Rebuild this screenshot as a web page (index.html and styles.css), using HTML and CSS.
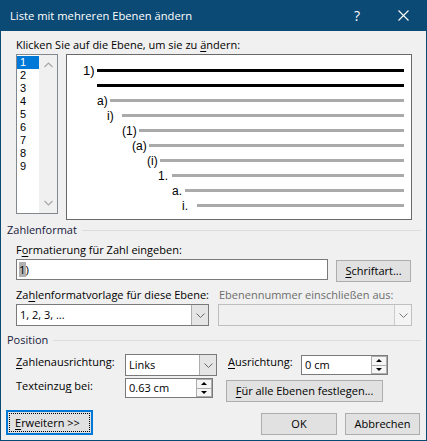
FILE: index.html
```html
<!DOCTYPE html>
<html lang="de">
<head>
<meta charset="utf-8">
<title>Liste mit mehreren Ebenen ändern</title>
<link rel="stylesheet" href="styles.css">
</head>
<body>
<div class="window">
  <div class="titlebar">
    <span class="title">Liste mit mehreren Ebenen ändern</span>
    <span class="tb-btn help">?</span>
    <span class="tb-btn close"><svg width="11" height="11" viewBox="0 0 11 11"><path d="M0.5 0.5 L10.5 10.5 M10.5 0.5 L0.5 10.5" stroke="#fff" stroke-width="1.1" fill="none"/></svg></span>
  </div>
  <div class="content">
    <div class="lbl indent">Klicken Sie auf die Ebene, um sie zu <u>ä</u>ndern:</div>
    <div class="levels">
      <div class="listbox">
        <ul class="items">
          <li class="sel">1</li><li>2</li><li>3</li><li>4</li><li>5</li><li>6</li><li>7</li><li>8</li><li>9</li>
        </ul>
        <div class="vscroll">
          <svg width="9" height="6" viewBox="0 0 9 6"><polyline points="0.5,5 4.5,1 8.5,5" fill="none" stroke="#a8a8a8" stroke-width="1.2"/></svg>
          <svg width="9" height="6" viewBox="0 0 9 6"><polyline points="0.5,1 4.5,5 8.5,1" fill="none" stroke="#a8a8a8" stroke-width="1.2"/></svg>
        </div>
      </div>
      <div class="preview">
        <div class="pv-row" style="padding-left:16px"><span class="pv-lbl big" style="width:14px">1)</span><i class="bar black"></i></div>
        <div class="pv-row" style="padding-left:30px"><i class="bar black"></i></div>
        <div class="pv-row" style="padding-left:30px"><span class="pv-lbl" style="width:13px">a)</span><i class="bar"></i></div>
        <div class="pv-row" style="padding-left:40px"><span class="pv-lbl" style="width:15px">i)</span><i class="bar"></i></div>
        <div class="pv-row" style="padding-left:55px"><span class="pv-lbl" style="width:17px">(1)</span><i class="bar"></i></div>
        <div class="pv-row" style="padding-left:65px"><span class="pv-lbl" style="width:17px">(a)</span><i class="bar"></i></div>
        <div class="pv-row" style="padding-left:80px"><span class="pv-lbl" style="width:13px">(i)</span><i class="bar"></i></div>
        <div class="pv-row" style="padding-left:91px"><span class="pv-lbl" style="width:14px">1.</span><i class="bar"></i></div>
        <div class="pv-row" style="padding-left:105px"><span class="pv-lbl" style="width:13px">a.</span><i class="bar"></i></div>
        <div class="pv-row" style="padding-left:115px"><span class="pv-lbl" style="width:15px">i.</span><i class="bar"></i></div>
      </div>
    </div>

    <div class="ghead first"><span>Zahlenformat</span><i class="rule"></i></div>
    <div class="lbl indent mt4">F<u>o</u>rmatierung für Zahl eingeben:</div>
    <div class="row-input">
      <div class="textbox"><span class="selected">1</span>)</div>
      <div class="btn btn-font"><u>S</u>chriftart...</div>
    </div>
    <div class="row-labels">
      <div class="lbl col1">Za<u>h</u>lenformatvorlage für diese Ebene:</div>
      <div class="lbl disabled">Ebenennummer einschließen aus:</div>
    </div>
    <div class="row-selects">
      <div class="combo w193"><span class="val">1, 2, 3, ...</span><span class="arrow"><svg width="9" height="5" viewBox="0 0 9 5"><polyline points="0.5,0.5 4.5,4.5 8.5,0.5" fill="none" stroke="#666" stroke-width="1"/></svg></span></div>
      <div class="combo w194 off"><span class="val"></span><span class="arrow"><svg width="9" height="5" viewBox="0 0 9 5"><polyline points="0.5,0.5 4.5,4.5 8.5,0.5" fill="none" stroke="#777" stroke-width="1"/></svg></span></div>
    </div>

    <div class="ghead second"><span>Position</span><i class="rule"></i></div>
    <div class="pos-row one">
      <div class="lbl plab"><u>Z</u>ahlenausrichtung:</div>
      <div class="combo w92"><span class="val">Links</span><span class="arrow"><svg width="9" height="5" viewBox="0 0 9 5"><polyline points="0.5,0.5 4.5,4.5 8.5,0.5" fill="none" stroke="#666" stroke-width="1"/></svg></span></div>
      <div class="lbl alab"><u>A</u>usrichtung:</div>
      <div class="spin w87"><span class="val">0 cm</span><span class="spbtns"><span class="sp up"><i></i></span><span class="sp down"><i></i></span></span></div>
    </div>
    <div class="pos-row two">
      <div class="lbl plab">Texteinzu<u>g</u> bei:</div>
      <div class="spin w88"><span class="val">0.63 cm</span><span class="spbtns"><span class="sp up"><i></i></span><span class="sp down"><i></i></span></span></div>
      <div class="btn btn-all"><u>F</u>ür alle Ebenen festlegen...</div>
    </div>

    <div class="bottom">
      <div class="btn btn-more"><span class="focus"><u>E</u>rweitern &gt;&gt;</span></div>
      <div class="btn btn-ok">OK</div>
      <div class="btn btn-cancel">Abbrechen</div>
    </div>
  </div>
</div>
</body>
</html>
```

FILE: styles.css
```css
* { box-sizing: border-box; }
html, body { margin: 0; padding: 0; }
body {
  width: 427px;
  height: 441px;
  overflow: hidden;
  font-family: "Open Sans", "Noto Sans", sans-serif;
  font-size: 11px;
  color: #000;
  background: #f0f0f0;
}
u { text-decoration: underline; text-underline-offset: 2px; text-decoration-thickness: 1px; }

.window {
  width: 427px;
  height: 441px;
  border: 1px solid #0b4a74;
  border-top: 0;
  background: #f0f0f0;
  display: flex;
  flex-direction: column;
}
.titlebar {
  height: 31px;
  flex: none;
  background: #0b4a74;
  color: #fff;
  display: flex;
  align-items: center;
  padding-left: 9px;
  font-size: 11.2px;
}
.title { flex: 1; white-space: nowrap; }
.tb-btn {
  width: 46px;
  height: 31px;
  display: flex;
  align-items: center;
  justify-content: center;
}
.help { font-size: 14px; }

.content {
  flex: 1;
  padding: 6px 6px 0 6px;
}
.lbl { height: 16px; line-height: 16px; white-space: nowrap; }
.indent { margin-left: 9px; }
.mt4 { margin-top: 4px; }

.levels {
  display: flex;
  margin: 1px 0 0 9px;
  height: 166px;
}
.listbox {
  width: 42px;
  height: 160px;
  border: 1px solid #828790;
  background: #fff;
  display: flex;
}
.items {
  list-style: none;
  margin: 0;
  padding: 1px 0 0 0;
  width: 22px;
  font-family: "Liberation Sans", Arial, sans-serif;
  font-size: 11px;
}
.items li {
  height: 13px;
  line-height: 13px;
  padding-left: 3px;
}
.items li.sel { background: #0078d7; color: #fff; }
.vscroll {
  flex: 1;
  background: #f0f0f0;
  display: flex;
  flex-direction: column;
  justify-content: space-between;
  align-items: center;
  padding: 7px 0 7px 0;
}

.preview {
  width: 346px;
  height: 166px;
  margin-left: 8px;
  border: 1px solid #6a6a6a;
  background: #fff;
  padding: 8px 7px 0 0;
}
.pv-row {
  height: 15px;
  display: flex;
  align-items: center;
}
.pv-lbl {
  flex: none;
  font-family: "Liberation Sans", Arial, sans-serif;
  font-size: 12px;
  line-height: 15px;
  white-space: nowrap;
  position: relative;
  top: 1px;
}
.pv-lbl.big { font-size: 13px; top: 0; }
.bar { flex: 1; height: 3px; background: #aaaaaa; }
.bar.black { background: #000; }

.ghead {
  display: flex;
  align-items: center;
  height: 16px;
  line-height: 16px;
  color: #17203c;
  white-space: nowrap;
}
.ghead.first { margin-top: 2px; }
.ghead.second { margin-top: 6px; }
.ghead .rule {
  flex: 1;
  height: 1px;
  background: #dcdcdc;
  margin: 0 -1px 0 5px;
}

.row-input {
  display: flex;
  align-items: flex-start;
  margin: 1px 0 0 9px;
}
.textbox {
  width: 312px;
  height: 21px;
  border: 1px solid #7a7a7a;
  background: #fff;
  padding-left: 2px;
  line-height: 19px;
  font-size: 11.5px;
}
.selected { background: #b0b0b0; }

.btn {
  height: 22px;
  border: 1px solid #adadad;
  background: #e1e1e1;
  text-align: center;
  line-height: 20px;
  white-space: nowrap;
}
.btn-font { width: 75px; margin: 1px 0 0 8px; }

.row-labels { display: flex; margin: 5px 0 0 9px; }
.col1 { width: 203px; }
.disabled { color: #6d6d6d; }

.row-selects { display: flex; gap: 9px; margin: 1px 0 0 9px; }
.combo {
  height: 22px;
  border: 1px solid #7a7a7a;
  background: #fff;
  display: flex;
}
.combo .val { flex: 1; padding-left: 3px; line-height: 20px; white-space: nowrap; }
.combo .arrow {
  width: 17px;
  background: #e5e5e5;
  border-left: 1px solid #adadad;
  display: flex;
  align-items: center;
  justify-content: center;
}
.combo.off { border-color: #bfbfbf; background: #f0f0f0; }
.combo.off .arrow { background: #f4f4f4; border-left-color: #cccccc; }
.w193 { width: 193px; }
.w194 { width: 194px; }
.w92 { width: 92px; }
.w87 { width: 87px; }
.w88 { width: 88px; }

.pos-row { display: flex; align-items: flex-start; margin-left: 9px; }
.pos-row.one { margin-top: 6px; height: 22px; }
.pos-row.two { margin-top: 2px; height: 24px; }
.plab { width: 109px; }
.alab { width: 73px; margin-left: 11px; }

.spin {
  height: 20px;
  border: 1px solid #7a7a7a;
  background: #fff;
  display: flex;
}
.pos-row.one .spin { margin-top: 1px; }
.spin .val { flex: 1; padding-left: 3px; line-height: 18px; white-space: nowrap; }
.spbtns {
  width: 16px;
  display: flex;
  flex-direction: column;
}
.sp {
  flex: 1;
  border: 1px solid #adadad;
  background: #f5f5f5;
  display: flex;
  align-items: center;
  justify-content: center;
}
.sp.up { border-bottom-width: 0; }
.sp i { width: 0; height: 0; border-left: 3px solid transparent; border-right: 3px solid transparent; }
.sp.up i { border-bottom: 3px solid #000; }
.sp.down i { border-top: 3px solid #000; }

.btn-all { width: 157px; margin: 2px 0 0 13px; }

.bottom {
  display: flex;
  align-items: flex-start;
  margin: 8px 0 0 -1px;
  height: 25px;
}
.btn-more {
  width: 87px;
  height: 25px;
  border: 2px solid #0078d7;
  padding: 1px;
  text-align: left;
  line-height: normal;
}
.focus {
  display: block;
  height: 100%;
  border: 1px dotted #000;
  padding-left: 5px;
  line-height: 17px;
}
.btn-ok { width: 76px; margin: 3px 0 0 auto; }
.btn-cancel { width: 75px; margin: 3px 0 0 8px; }
```
